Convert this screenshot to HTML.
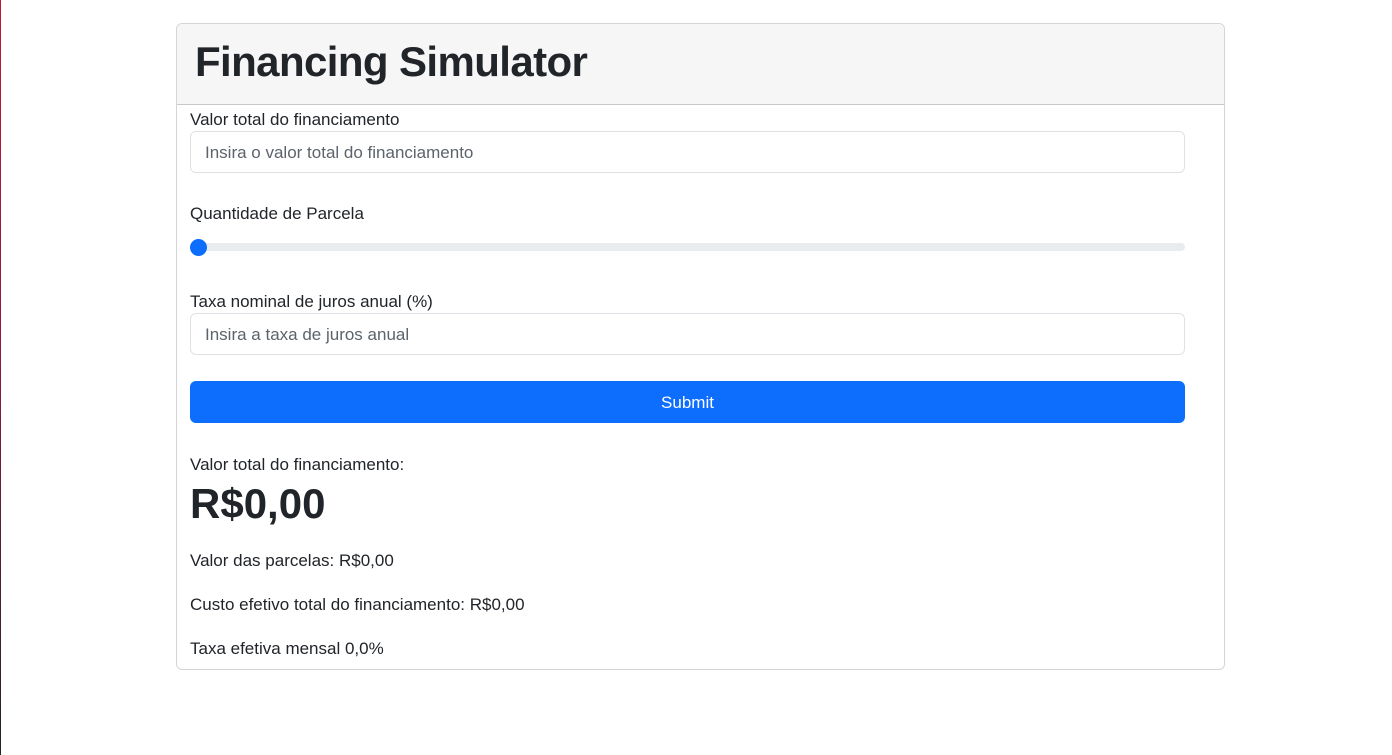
<!DOCTYPE html>
<html><head><meta charset="utf-8"><style>
body{margin:0;width:1392px;height:755px;background:#fff;font-family:"Liberation Sans",sans-serif;color:#212529;position:relative;overflow:hidden}
.edge{position:absolute;left:0;top:0;width:1px;height:755px;background:linear-gradient(#c0183f,#8a1a3a 50%,#222 100%)}
.card{position:absolute;left:176px;top:23px;width:1047px;height:645px;border:1px solid #d5d5d5;border-radius:6px;overflow:hidden}
.hdr{position:absolute;left:0;top:0;right:0;height:80px;background:#f6f6f6;border-bottom:1px solid #c8c8c8}
.hdr h1{margin:0;position:absolute;left:18px;top:14px;font-size:42px;font-weight:600;letter-spacing:-0.6px}
.t{position:absolute;left:13px;font-size:17px;white-space:nowrap}
.inp{position:absolute;left:13px;width:993px;height:40px;border:1px solid #dee2e6;border-radius:6px;box-sizing:content-box}
.inp span{position:absolute;left:14px;top:11px;font-size:17px;color:#5c636a}
.track{position:absolute;left:13px;top:219px;width:995px;height:8px;background:#e9ecef;border-radius:4px}
.thumb{position:absolute;left:13px;top:215px;width:17px;height:17px;border-radius:50%;background:#0d6efd}
.btn{position:absolute;left:13px;top:357px;width:995px;height:42px;background:#0d6efd;border-radius:6px;color:#fff;font-size:17px;text-align:center;line-height:44px}
</style></head><body>
<div class="edge"></div>
<div class="card">
<div class="hdr"><h1>Financing Simulator</h1></div>
<div class="t" style="top:86px">Valor total do financiamento</div>
<div class="inp" style="top:107px"><span>Insira o valor total do financiamento</span></div>
<div class="t" style="top:180px">Quantidade de Parcela</div>
<div class="track"></div><div class="thumb"></div>
<div class="t" style="top:268px">Taxa nominal de juros anual (%)</div>
<div class="inp" style="top:289px"><span>Insira a taxa de juros anual</span></div>
<div class="btn">Submit</div>
<div class="t" style="top:431px">Valor total do financiamento:</div>
<div class="t" style="top:456px;font-size:42px;font-weight:600">R$0,00</div>
<div class="t" style="top:527px">Valor das parcelas: R$0,00</div>
<div class="t" style="top:571px">Custo efetivo total do financiamento: R$0,00</div>
<div class="t" style="top:615px">Taxa efetiva mensal 0,0%</div>
</div>
</body></html>
